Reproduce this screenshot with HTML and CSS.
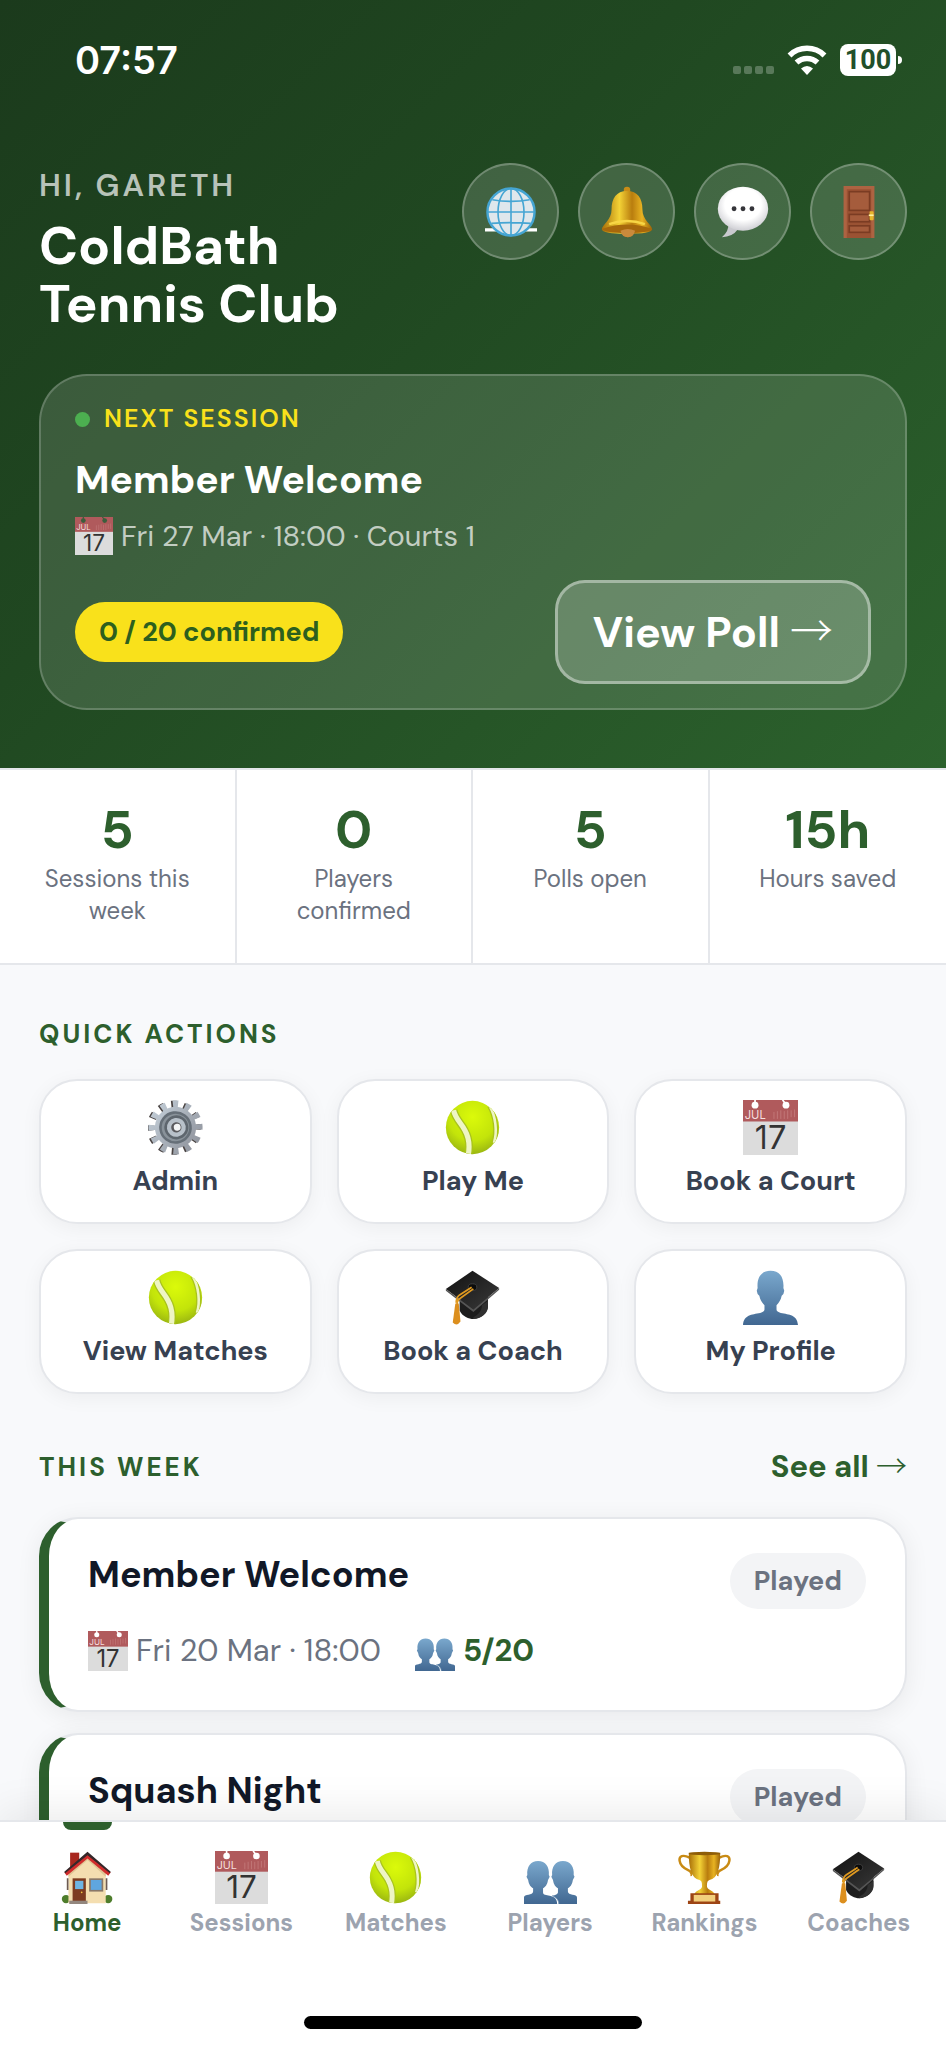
FILE: index.html
```html
<!DOCTYPE html>
<html lang="en">
<head>
    <meta charset="UTF-8">
    <meta name="viewport" content="width=device-width, initial-scale=1.0">
    <title>ColdBath Tennis Club</title>
    <link rel="stylesheet" href="styles.css">
</head>
<body>
    <!-- Shared icons -->
    <svg class="sprite" aria-hidden="true">
        <defs>
            <linearGradient id="gold" x1="0" x2="1" y1="0" y2="0">
                <stop offset="0" stop-color="#a96f08"/>
                <stop offset="0.35" stop-color="#f3d236"/>
                <stop offset="0.6" stop-color="#b97d0e"/>
                <stop offset="0.8" stop-color="#e8b322"/>
                <stop offset="1" stop-color="#9a6208"/>
            </linearGradient>
            <linearGradient id="blue" x1="0" x2="0" y1="0" y2="1">
                <stop offset="0" stop-color="#7aa8cd"/>
                <stop offset="1" stop-color="#416791"/>
            </linearGradient>
            <linearGradient id="steel" x1="0" x2="1" y1="0" y2="1">
                <stop offset="0" stop-color="#c3ced8"/>
                <stop offset="1" stop-color="#8e929b"/>
            </linearGradient>
            <radialGradient id="ballFill" cx="0.5" cy="0.3" r="0.75">
                <stop offset="0" stop-color="#dbfa0a"/>
                <stop offset="0.6" stop-color="#c3e40a"/>
                <stop offset="1" stop-color="#93ae12"/>
            </radialGradient>
            <radialGradient id="bubbleFill" cx="0.5" cy="0.4" r="0.6">
                <stop offset="0.6" stop-color="#ffffff"/>
                <stop offset="1" stop-color="#cfcfd4"/>
            </radialGradient>
            <linearGradient id="capTop" x1="0" x2="1" y1="0" y2="1">
                <stop offset="0" stop-color="#111111"/>
                <stop offset="1" stop-color="#3a3a3a"/>
            </linearGradient>
            <clipPath id="ballClip"><circle cx="32" cy="32" r="31"/></clipPath>
            <mask id="calHoles">
                <rect width="64" height="64" fill="#fff"/>
                <path d="M14 0v5M46 0l4 5" stroke="#000" stroke-width="2"/>
                <circle cx="14" cy="6" r="4" fill="#000"/>
                <circle cx="50" cy="6" r="4" fill="#000"/>
            </mask>
        </defs>

        <symbol id="calendar" viewBox="0 0 64 64">
            <g mask="url(#calHoles)">
                <rect width="64" height="64" fill="#dcdcdc"/>
                <rect width="64" height="25" fill="#b05a5c"/>
            </g>
            <path d="M36 14v8M40 13v9M44 12v10M48 13v9M52 12v10M56 12v8M60 11v9" stroke="#c47b7b" stroke-width="1"/>
        </symbol>

        <symbol id="ball" viewBox="0 0 64 64">
            <circle cx="32" cy="32" r="31" fill="url(#ballFill)"/>
            <g clip-path="url(#ballClip)" fill="none">
                <path d="M10 12c2 10 9 15 13 23 5 9 6 19 4 29" stroke="#a9c31c" stroke-width="9"/>
                <path d="M10 12c2 10 9 15 13 23 5 9 6 19 4 29" stroke="#eef5c4" stroke-width="6"/>
                <path d="M52 7c7 12 9 30 5 43" stroke="#a9c31c" stroke-width="6"/>
                <path d="M52 7c7 12 9 30 5 43" stroke="#eef5c4" stroke-width="3"/>
            </g>
        </symbol>

        <symbol id="gear" viewBox="0 0 64 64">
            <g transform="rotate(-8 32 32)">
                <circle cx="30" cy="32" r="27" fill="none" stroke="#4a4443" stroke-width="9" stroke-dasharray="6 8.14"/>
                <circle cx="32" cy="32" r="27" fill="none" stroke="url(#steel)" stroke-width="9" stroke-dasharray="6 8.14"/>
                <circle cx="32" cy="32" r="24" fill="url(#steel)"/>
                <circle cx="32" cy="32" r="19" fill="#666f78"/>
                <circle cx="32" cy="32" r="16" fill="#89929a"/>
                <circle cx="33" cy="32" r="14" fill="#5e666e"/>
                <circle cx="33" cy="32" r="11" fill="#b8c1ca"/>
                <circle cx="33" cy="32" r="6" fill="#5a5a5e"/>
                <circle cx="34" cy="32" r="4" fill="#f4f5f6"/>
            </g>
        </symbol>

        <symbol id="cap" viewBox="0 0 64 64">
            <path d="M17 35v12c3 7 11 10 16 10 9 0 17-8 17-15V30z" fill="#1d1d1d"/>
            <path d="M33 55c6-3 10-8 10-14l7-5v7c0 7-8 14-17 14z" fill="#303030"/>
            <path d="M32 1l31 20-30 25L1 22z" fill="url(#capTop)"/>
            <path d="M1 22l32 24 30-25v2L33 49 1 24z" fill="#555"/>
            <ellipse cx="32" cy="20" rx="5" ry="4" fill="#0b0b0b" stroke="#444"/>
            <path d="M31 20L17 29q-4 3-4 9M33 22L19 32q-5 3-5 8" fill="none" stroke="#e09a20" stroke-width="2"/>
            <path d="M12 39h4l2 21q-4 6-9 1z" fill="#dc8f1e"/>
        </symbol>

        <symbol id="person" viewBox="0 0 64 64">
            <path d="M32 1c11 0 16 8 15 20l1 3-1 4-2 2c-1 5-3 8-6 11v5c0 2 2 3 5 4 10 2 19 2 20 14H0c1-12 10-12 20-14 3-1 5-2 5-4v-5c-3-3-5-6-6-11l-2-2-1-4 1-3C16 9 21 1 32 1z" fill="url(#blue)"/>
        </symbol>

        <symbol id="people" viewBox="0 0 64 64">
            <g fill="url(#blue)">
                <path d="M17 12c9 0 14 7 13 17l1 2-2 4c-1 6-3 8-6 10v5c0 3 4 3 8 4 6 1 9 4 9 10H0v-8c0-4 11-2 11-7v-4c-3-2-5-4-6-10l-2-4 1-2C3 19 8 12 17 12z"/>
                <path d="M47 12c-9 0-14 7-13 17l-1 2 2 4c1 6 3 8 6 10v5c0 2-3 3-7 4 5 2 8 5 8 10h22v-8c0-4-11-2-11-7v-4c3-2 5-4 6-10l2-4-1-2c1-10-4-17-13-17z"/>
            </g>
            <path d="M34 54c5 2 8 5 8 10" fill="none" stroke="#7295b6" stroke-width="1"/>
        </symbol>

        <symbol id="trophy" viewBox="0 0 64 64">
            <path d="M14 8C6 4 1 6 2 12c1 8 8 10 12 12 3 2 2 5 1 5" fill="none" stroke="#c98b14" stroke-width="3"/>
            <path d="M50 8c8-4 13-2 12 4-1 8-8 10-12 12-3 2-2 5-1 5" fill="none" stroke="#c98b14" stroke-width="3"/>
            <path d="M13 2h38c0 18-3 31-13 33-3 1-3 4-3 8 0 4 7 4 9 9H20c2-5 9-5 9-9 0-4 0-7-3-8C16 33 13 20 13 2z" fill="url(#gold)"/>
            <ellipse cx="32" cy="3" rx="19" ry="2" fill="#8e5d08"/>
            <path d="M15 51h34v9h2v4H12v-4h3z" fill="#9d4514"/>
            <rect x="19" y="53" width="26" height="8" fill="#f2cf7c"/>
        </symbol>

        <symbol id="house" viewBox="0 0 64 64">
            <circle cx="6" cy="58" r="5" fill="#4e7d2c"/>
            <circle cx="57" cy="58" r="5" fill="#4e7d2c"/>
            <rect x="11" y="2" width="11" height="20" fill="#a8281f"/>
            <path d="M9 25L32 7l22 18v38H9z" fill="#f4deb0"/>
            <path d="M9 31l23-20 22 20v-6L32 5 9 23z" fill="#e0c594"/>
            <path d="M4 26L32 2l28 24-3 4L32 9 7 30z" fill="#d02c2c"/>
            <path d="M4 25L32 1l28 24-1 2L32 5 5 27z" fill="#34282a"/>
            <rect x="14" y="33" width="16" height="28" fill="#7d3b20"/>
            <rect x="17" y="36" width="10" height="10" fill="#6eb4e3"/>
            <circle cx="25" cy="50" r="1" fill="#f5c542"/>
            <rect x="34" y="33" width="17" height="16" fill="#8a7868"/>
            <rect x="36" y="35" width="13" height="12" fill="#5fa6df"/>
            <path d="M8 33v14M55 33v14" stroke="#6d5b52" stroke-width="2"/>
            <rect x="10" y="60" width="22" height="4" fill="#93877e"/>
        </symbol>

        <symbol id="globe" viewBox="0 0 64 64">
            <rect x="0" y="52" width="64" height="4" fill="#fff"/>
            <circle cx="32" cy="32" r="29" fill="#dfe7ec"/>
            <g fill="none" stroke="#45a5d3" stroke-width="2">
                <circle cx="32" cy="32" r="29" stroke-width="3"/>
                <ellipse cx="32" cy="32" rx="16" ry="29"/>
                <path d="M32 3v58M3 32h58M9 17q23 4 46 0M8 46q24-2 48 0"/>
            </g>
        </symbol>

        <symbol id="bell" viewBox="0 0 64 64">
            <circle cx="32" cy="5" r="4" fill="#c98c17"/>
            <circle cx="33" cy="55" r="8" fill="#bd7426"/>
            <path d="M32 6c13 0 19 9 19 23 0 13 11 18 12 24 0 4-11 6-31 6S1 57 1 53c1-6 12-11 12-24C13 15 19 6 32 6z" fill="url(#gold)"/>
            <path d="M1 53q31-11 62 0-4 5-31 5T1 53z" fill="#a7680c"/>
            <path d="M10 47q22-8 44 0" fill="none" stroke="#f7d545" stroke-width="3"/>
            <path d="M24 55q9-4 18 0-2 8-9 8t-9-8z" fill="#c98a3c"/>
        </symbol>

        <symbol id="chat" viewBox="0 0 64 64">
            <path d="M14 46q1 9-8 17 13 0 20-10z" fill="#c9c9ce"/>
            <ellipse cx="32" cy="28" rx="31" ry="27" fill="url(#bubbleFill)"/>
            <g fill="#35353a">
                <circle cx="21" cy="28" r="3"/>
                <circle cx="32" cy="28" r="3"/>
                <circle cx="43" cy="28" r="3"/>
            </g>
        </symbol>

        <symbol id="door" viewBox="0 0 64 64">
            <rect x="13" y="0" width="38" height="64" fill="#ad6342"/>
            <rect x="17" y="4" width="30" height="60" fill="#9a5233"/>
            <g fill="#a55c3c" stroke="#7b3c23" stroke-width="2">
                <rect x="20" y="7" width="25" height="23"/>
                <rect x="20" y="35" width="25" height="9"/>
                <rect x="20" y="49" width="25" height="8"/>
            </g>
            <rect x="45" y="31" width="5" height="11" rx="1" fill="#e5b62c"/>
            <path d="M44 36h6" stroke="#fff0a0" stroke-width="2"/>
        </symbol>
    </svg>

    <header class="hero">
        <div class="status-bar">
            <span class="status-time">07:57</span>
            <div class="status-icons">
                <span class="signal"><i></i><i></i><i></i><i></i></span>
                <svg class="wifi" viewBox="0 0 40 30" aria-hidden="true">
                    <path d="M2.500 10.500a25 25 0 0 1 35 0M9.500 17.500a15.500 15.500 0 0 1 21 0" fill="none" stroke="#fff" stroke-width="5.500"/>
                    <path d="M14 23.500q6-5 12 0L20 30z" fill="#fff"/>
                </svg>
                <span class="battery">100</span>
            </div>
        </div>

        <div class="hero-top">
            <div>
                <p class="greeting">HI, GARETH</p>
                <h1>ColdBath<br>Tennis Club</h1>
            </div>
            <div class="hero-actions">
                <a class="icon-btn" href="#" aria-label="Website"><svg><use href="#globe"/></svg></a>
                <button class="icon-btn" aria-label="Notifications"><svg><use href="#bell"/></svg></button>
                <button class="icon-btn" aria-label="Messages"><svg><use href="#chat"/></svg></button>
                <button class="icon-btn" aria-label="Log out"><svg><use href="#door"/></svg></button>
            </div>
        </div>

        <section class="next-card">
            <p class="next-label"><span class="dot"></span>NEXT SESSION</p>
            <h2 class="next-title">Member Welcome</h2>
            <p class="next-meta">
                <svg class="meta-icon" viewBox="0 0 64 64"><use href="#calendar"/><text class="cal-month" x="2" y="22">JUL</text><text class="cal-day" x="32" y="57">17</text></svg>
                Fri 27 Mar · 18:00 · Courts 1
            </p>
            <div class="next-footer">
                <span class="confirmed">0 / 20 confirmed</span>
                <button class="poll-btn">View Poll <span class="arrow">→</span></button>
            </div>
        </section>
    </header>

    <section class="stats">
        <div class="stat">
            <div class="stat-value">5</div>
            <div class="stat-label">Sessions this week</div>
        </div>
        <div class="stat">
            <div class="stat-value">0</div>
            <div class="stat-label">Players confirmed</div>
        </div>
        <div class="stat">
            <div class="stat-value">5</div>
            <div class="stat-label">Polls open</div>
        </div>
        <div class="stat">
            <div class="stat-value">15h</div>
            <div class="stat-label">Hours saved</div>
        </div>
    </section>

    <main class="content">
        <div class="section-head">
            <h2>QUICK ACTIONS</h2>
        </div>
        <div class="actions">
            <button class="action"><svg><use href="#gear"/></svg>Admin</button>
            <button class="action"><svg><use href="#ball"/></svg>Play Me</button>
            <button class="action">
                <svg viewBox="0 0 64 64"><use href="#calendar"/><text class="cal-month" x="2" y="22">JUL</text><text class="cal-day" x="32" y="57">17</text></svg>
                Book a Court
            </button>
            <button class="action"><svg><use href="#ball"/></svg>View Matches</button>
            <button class="action"><svg><use href="#cap"/></svg>Book a Coach</button>
            <button class="action"><svg><use href="#person"/></svg>My Profile</button>
        </div>

        <div class="section-head week-head">
            <h2>THIS WEEK</h2>
            <a class="see-all" href="#">See all <span class="arrow">→</span></a>
        </div>
        <div class="sessions">
            <article class="session">
                <div class="session-head">
                    <h3>Member Welcome</h3>
                    <span class="badge">Played</span>
                </div>
                <div class="session-meta">
                    <span>
                        <svg class="meta-icon" viewBox="0 0 64 64"><use href="#calendar"/><text class="cal-month" x="2" y="22">JUL</text><text class="cal-day" x="32" y="57">17</text></svg>
                        Fri 20 Mar · 18:00
                    </span>
                    <span class="count"><svg class="meta-icon"><use href="#people"/></svg>5/20</span>
                </div>
            </article>
            <article class="session">
                <div class="session-head">
                    <h3>Squash Night</h3>
                    <span class="badge">Played</span>
                </div>
            </article>
        </div>
    </main>

    <nav class="tab-bar">
        <div class="tabs">
            <a class="tab active" href="#"><svg><use href="#house"/></svg>Home</a>
            <a class="tab" href="#">
                <svg viewBox="0 0 64 64"><use href="#calendar"/><text class="cal-month" x="2" y="22">JUL</text><text class="cal-day" x="32" y="57">17</text></svg>
                Sessions
            </a>
            <a class="tab" href="#"><svg><use href="#ball"/></svg>Matches</a>
            <a class="tab" href="#"><svg><use href="#people"/></svg>Players</a>
            <a class="tab" href="#"><svg><use href="#trophy"/></svg>Rankings</a>
            <a class="tab" href="#"><svg><use href="#cap"/></svg>Coaches</a>
        </div>
        <div class="home-indicator"></div>
    </nav>
</body>
</html>
```
FILE: styles.css
```css
* {
    box-sizing: border-box;
}

body {
    font-family: "DM Sans", Inter, "Liberation Sans", sans-serif;
    margin: 0;
    height: 100vh;
    display: flex;
    flex-direction: column;
    background-color: #f8f9fb;
    color: #111827;
}

h1, h2, h3, p {
    margin: 0;
}

button {
    font-family: inherit;
    cursor: pointer;
}

a {
    text-decoration: none;
}

.sprite {
    position: absolute;
    width: 0;
    height: 0;
}

.cal-month {
    font-family: Inter, sans-serif;
    font-size: 13px;
    font-weight: 400;
    fill: #f4dede;
}

.cal-day {
    font-family: Inter, sans-serif;
    font-size: 38px;
    font-weight: 400;
    text-anchor: middle;
    fill: #333;
}

.arrow {
    font-family: "Noto Sans CJK JP", sans-serif;
    font-weight: 300;
    line-height: 1;
}

/* Header */
.hero {
    flex-shrink: 0;
    padding: 0 39px 58px;
    background: linear-gradient(135deg, #1b3a1c 0%, #204821 40%, #2c622d 100%);
    color: #fff;
}

.status-bar {
    display: flex;
    justify-content: space-between;
    align-items: center;
    height: 120px;
    margin-bottom: 43px;
    padding: 0 6px 0 36px;
}

.status-time {
    font-family: Inter, sans-serif;
    font-size: 38px;
    font-weight: 600;
}

.status-icons {
    display: flex;
    align-items: center;
    gap: 13px;
}

.signal {
    display: flex;
    gap: 3px;
    padding-top: 20px;
}

.signal i {
    width: 8px;
    height: 8px;
    border-radius: 2px;
    background-color: rgba(255, 255, 255, 0.25);
}

.wifi {
    width: 40px;
    height: 30px;
}

.battery {
    position: relative;
    width: 56px;
    height: 32px;
    margin-right: 5px;
    border-radius: 8px;
    background-color: #fff;
    color: #22502a;
    font-family: Roboto, sans-serif;
    font-size: 27px;
    font-weight: 700;
    line-height: 32px;
    text-align: center;
}

.battery::after {
    content: "";
    position: absolute;
    right: -6px;
    top: 12px;
    width: 4px;
    height: 8px;
    border-radius: 0 4px 4px 0;
    background-color: #fff;
}

.hero-top {
    display: flex;
    justify-content: space-between;
    align-items: flex-start;
    margin-bottom: 41px;
}

.greeting {
    margin-bottom: 8px;
    font-size: 31px;
    font-weight: 600;
    line-height: 46px;
    letter-spacing: 3px;
    color: rgba(255, 255, 255, 0.7);
}

h1 {
    font-size: 53px;
    font-weight: 700;
    line-height: 58px;
}

.hero-actions {
    display: flex;
    gap: 19px;
}

.icon-btn {
    display: flex;
    justify-content: center;
    align-items: center;
    width: 97px;
    height: 97px;
    padding: 0;
    border: 2px solid rgba(255, 255, 255, 0.25);
    border-radius: 50%;
    background-color: rgba(255, 255, 255, 0.15);
}

.icon-btn svg {
    width: 52px;
    height: 52px;
}

.next-card {
    padding: 27px 34px 24px;
    border: 2px solid rgba(255, 255, 255, 0.2);
    border-radius: 48px;
    background-color: rgba(255, 255, 255, 0.13);
}

.next-label {
    display: flex;
    align-items: center;
    gap: 14px;
    margin-bottom: 22px;
    font-size: 25px;
    font-weight: 600;
    line-height: 32px;
    letter-spacing: 2px;
    color: #f9e11b;
}

.dot {
    width: 15px;
    height: 15px;
    border-radius: 50%;
    background-color: #4caf50;
}

.next-title {
    margin-bottom: 14px;
    font-size: 39px;
    line-height: 46px;
}

.next-meta {
    display: flex;
    align-items: center;
    gap: 8px;
    margin-bottom: 25px;
    font-size: 29px;
    line-height: 38px;
    color: rgba(255, 255, 255, 0.7);
}

.meta-icon {
    flex-shrink: 0;
    width: 38px;
    height: 38px;
}

.next-footer {
    display: flex;
    justify-content: space-between;
    align-items: center;
}

.confirmed {
    padding: 0 24px;
    border-radius: 30px;
    background-color: #f9e11b;
    color: #2d5f1e;
    font-size: 27px;
    font-weight: 700;
    line-height: 60px;
}

.poll-btn {
    padding: 0 35px;
    border: 3px solid rgba(255, 255, 255, 0.4);
    border-radius: 30px;
    background-color: rgba(255, 255, 255, 0.2);
    color: #fff;
    font-size: 43px;
    font-weight: 700;
    line-height: 98px;
}

/* Stats */
.stats {
    flex-shrink: 0;
    display: grid;
    grid-template-columns: repeat(4, 1fr);
    border-top: 2px solid #e5e7eb;
    border-bottom: 2px solid #e5e7eb;
    background-color: #fff;
    text-align: center;
}

.stat {
    padding: 32px 30px 36px;
    border-right: 2px solid #e5e7eb;
}

.stat:last-child {
    border-right: none;
}

.stat-value {
    margin-bottom: 5px;
    font-size: 53px;
    font-weight: 700;
    line-height: 56px;
    color: #2d5f2d;
}

.stat-label {
    font-size: 24px;
    line-height: 32px;
    color: #6b7280;
}

/* Main content */
.content {
    flex: 1;
    min-height: 0;
    overflow: hidden;
    padding: 51px 39px 0;
}

.section-head {
    display: flex;
    justify-content: space-between;
    align-items: center;
    margin-bottom: 27px;
    line-height: 36px;
}

.section-head h2 {
    font-size: 26px;
    font-weight: 700;
    letter-spacing: 3px;
    color: #2d5f2d;
}

.week-head {
    margin: 54px 0 32px;
}

.see-all {
    font-size: 31px;
    font-weight: 700;
    color: #2d5f2d;
}

.actions {
    display: grid;
    grid-template-columns: repeat(3, 1fr);
    gap: 25px;
}

.action {
    display: flex;
    flex-direction: column;
    align-items: center;
    gap: 10px;
    padding: 19px 10px 25px;
    border: 2px solid #e5e7eb;
    border-radius: 38px;
    background-color: #fff;
    box-shadow: 0 4px 20px rgba(0, 0, 0, 0.05);
    color: #374151;
    font-size: 27px;
    font-weight: 700;
    line-height: 32px;
}

.action svg {
    width: 55px;
    height: 55px;
}

.sessions {
    display: flex;
    flex-direction: column;
    gap: 21px;
}

.session {
    padding: 34px 39px 37px;
    border: 2px solid #e5e7eb;
    border-left: 10px solid #2d5f2d;
    border-radius: 39px;
    background-color: #fff;
    box-shadow: 0 4px 24px rgba(0, 0, 0, 0.07);
}

.session-head {
    display: flex;
    justify-content: space-between;
    align-items: flex-start;
    margin-bottom: 20px;
}

.session h3 {
    font-size: 36px;
    font-weight: 700;
    line-height: 44px;
}

.badge {
    padding: 0 24px;
    border-radius: 28px;
    background-color: #f3f4f6;
    color: #6b7280;
    font-size: 27px;
    font-weight: 700;
    line-height: 56px;
}

.session-meta {
    display: flex;
    gap: 34px;
    font-size: 31px;
    line-height: 44px;
    color: #6b7280;
}

.session-meta span {
    display: flex;
    align-items: center;
    gap: 8px;
}

.session-meta .meta-icon {
    width: 40px;
    height: 40px;
}

.session-meta .count {
    font-weight: 700;
    color: #2d5f2d;
}

/* Bottom navigation */
.tab-bar {
    flex-shrink: 0;
    position: relative;
    padding: 0 10px 19px;
    border-top: 2px solid #e5e7eb;
    background-color: #fff;
    box-shadow: 0 -8px 40px rgba(0, 0, 0, 0.08);
}

.tabs {
    display: grid;
    grid-template-columns: repeat(6, 1fr);
}

.tab {
    position: relative;
    display: flex;
    flex-direction: column;
    align-items: center;
    gap: 5px;
    padding-top: 29px;
    font-size: 24px;
    font-weight: 700;
    line-height: 28px;
    color: #9ca3af;
}

.tab svg {
    width: 53px;
    height: 53px;
}

.tab.active {
    color: #2d5f2d;
}

.tab.active::before {
    content: "";
    position: absolute;
    top: 0;
    width: 49px;
    height: 8px;
    border-radius: 0 0 8px 8px;
    background-color: #2d5f2d;
}

.home-indicator {
    width: 338px;
    height: 13px;
    margin: 79px auto 0;
    border-radius: 7px;
    background-color: #000;
}
```
